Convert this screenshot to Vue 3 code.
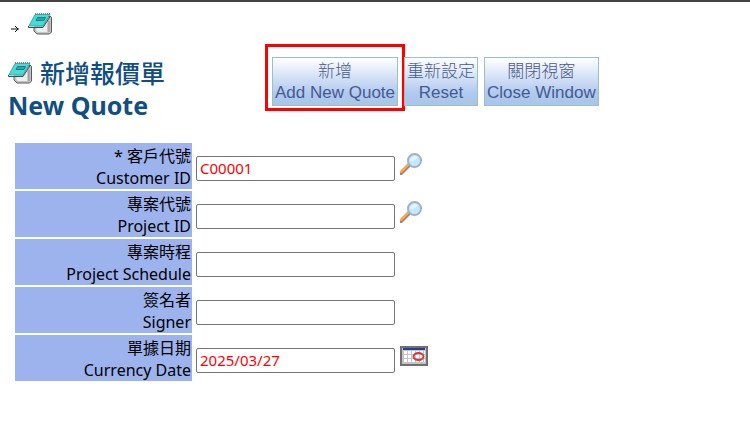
<template>
  <div class="page">

    <svg class="symbols" aria-hidden="true">
      <symbol id="book" viewBox="0 0 24 22">
        <path d="M8 3.5h14.5l1 1V19l-2 2H9l-3-3v-4" fill="#c6c4c4" stroke="#5c5a5a" />
        <path d="M9 15h6l4-7v11H10l-2-2z" fill="#efeded" />
        <path d="M20 8h2v11h-2z" fill="#a9a7a7" />
        <path d="M7 1.5h15L15 13H.8z" fill="#45dcd8" stroke="#2b8f92" stroke-width=".7" />
        <path d="M.5 13v1.5H15L22.500 3" fill="none" stroke="#2d5658" />
        <path d="M9.500 4.500h8L16 7.500H8z" fill="#2ba6aa" stroke="#176f78" stroke-width=".8" />
        <path d="M7 .8h15" stroke="#555" stroke-dasharray="1 1" />
      </symbol>
      <symbol id="lens" viewBox="0 0 22 22">
        <path d="M1 20l8-8" stroke="#b57a5c" stroke-width="4" stroke-linecap="round" />
        <path d="M1 19l7-7" stroke="#f8ad5c" stroke-width="2" stroke-linecap="round" />
        <circle cx="14.5" cy="7.5" r="6.5" fill="#c4eafd" stroke="#9bb0de" stroke-width="2" />
        <path d="M10 8a5 5 0 0 1 8-4q-2 4-8 4z" fill="#e5f8ff" />
      </symbol>
    </svg>

    <nav class="crumb">
      <svg class="arrow" viewBox="0 0 10 8"><path d="M1 4h8M5 1l3 3-3 3" /></svg>
      <svg class="book"><use href="#book" /></svg>
    </nav>

    <header class="head">
      <h1 class="title">
        <span class="title-zh"><svg class="book"><use href="#book" /></svg>新增報價單</span>
        <span>New Quote</span>
      </h1>
      <div class="actions">
        <div v-for="b in buttons" :key="b.en" class="action" :class="{ marked: b.marked }">
          <button type="button" @click="run(b.action)">{{ b.zh }}<br>{{ b.en }}</button>
        </div>
      </div>
    </header>

    <table class="form">
      <tbody>
        <tr v-for="f in fields" :key="f.id">
          <th scope="row">
            <label :for="f.id">{{ f.zh }}<br>{{ f.en }}</label>
          </th>
          <td>
            <div class="field">
              <input :id="f.id" v-model="form[f.id]" type="text">
              <button v-if="f.icon === 'lens'" type="button" class="icon" :aria-label="f.en">
                <svg class="lens"><use href="#lens" /></svg>
              </button>
              <button v-if="f.icon === 'calendar'" type="button" class="icon" :aria-label="f.en">
                <svg class="calendar" viewBox="0 0 28 20">
                  <rect x="1" y="1" width="26" height="18" fill="#c4c4c4" stroke="#707070" stroke-width="2" />
                  <path d="M3 3h22" stroke="#1c429c" stroke-width="2" />
                  <path d="M4 6.500h21M4 10.500h21M4 14.500h21" stroke="#fff" stroke-width="3" stroke-dasharray="3 1" />
                  <ellipse cx="18.500" cy="10.500" rx="5" ry="3.500" fill="none" stroke="#d93535" stroke-width="2" />
                </svg>
              </button>
            </div>
          </td>
        </tr>
      </tbody>
    </table>

  </div>
</template>

<script setup>
import { reactive } from "vue"

const emit = defineEmits(["add", "close"])

const buttons = [
  { zh: "新增", en: "Add New Quote", action: "add", marked: true },
  { zh: "重新設定", en: "Reset", action: "reset" },
  { zh: "關閉視窗", en: "Close Window", action: "close" }
]

const fields = [
  { id: "customer", zh: "* 客戶代號", en: "Customer ID", icon: "lens" },
  { id: "project", zh: "專案代號", en: "Project ID", icon: "lens" },
  { id: "schedule", zh: "專案時程", en: "Project Schedule" },
  { id: "signer", zh: "簽名者", en: "Signer" },
  { id: "date", zh: "單據日期", en: "Currency Date", icon: "calendar" }
]

const initial = {
  customer: "C00001",
  project: "",
  schedule: "",
  signer: "",
  date: "2025/03/27"
}

const form = reactive({ ...initial })

function run(action) {
  if (action === "reset") {
    Object.assign(form, initial)
  } else {
    emit(action, { ...form })
  }
}
</script>

<style>
body {
  background: #fff;
}
</style>

<style scoped>
.page {
  box-sizing: border-box;
  border-top: 2px solid #434343;
  padding: 10px 8px 0;
  font-family: "Noto Sans", "Noto Sans CJK TC", sans-serif;
  color: #000;
}

.symbols {
  position: absolute;
  width: 0;
  height: 0;
}

.crumb {
  display: flex;
  align-items: center;
  gap: 8px;
  height: 24px;
  padding-left: 2px;
}

.arrow {
  width: 10px;
  height: 8px;
  margin-top: 10px;
  fill: none;
  stroke: #111;
}

.book {
  width: 24px;
  height: 22px;
  flex: none;
}

.head {
  display: flex;
  align-items: flex-start;
  padding-top: 21px;
}

.title {
  width: 264px;
  margin: 0;
  font-size: 25px;
  line-height: 32px;
  color: #104e84;
}

.title span {
  display: block;
}

.title .title-zh {
  display: flex;
  align-items: center;
  gap: 8px;
  font-weight: 500;
}

.actions {
  display: flex;
  gap: 6px;
}

.action {
  position: relative;
}

.action button {
  height: 49px;
  padding: 0 2px;
  border: 1px solid #9dbfc0;
  background: linear-gradient(#fff, #b0c9ee 75%, #a9c5ea);
  font-family: "Liberation Sans", "Noto Sans CJK TC", sans-serif;
  font-size: 17px;
  font-weight: 300;
  line-height: 21px;
  color: #48598f;
  white-space: nowrap;
}

.marked::after {
  content: "";
  position: absolute;
  inset: -13px -7px -5px;
  border: 3px solid #f00;
  pointer-events: none;
}

.form {
  margin: 20px 0 0 5px;
  border-spacing: 2px;
}

.form th {
  width: 175px;
  height: 44px;
  padding: 2px 1px 0;
  background: #9db3ee;
  font-size: 16px;
  font-weight: 400;
  line-height: 22px;
  text-align: right;
}

.form label {
  display: block;
}

.form td {
  padding: 1px 2px;
}

.field {
  display: flex;
  align-items: center;
  gap: 5px;
}

.field input {
  box-sizing: border-box;
  width: 199px;
  height: 25px;
  margin: 4px 0 0;
  padding: 1px 3px;
  border: 1px solid #767676;
  border-radius: 2px;
  background: #fff;
  font-family: inherit;
  font-size: 15px;
  color: #f00;
}

.icon {
  padding: 0;
  border: 0;
  background: none;
  margin-bottom: 5px;
}

.icon svg {
  display: block;
}

.lens {
  width: 22px;
  height: 22px;
}

.calendar {
  width: 28px;
  height: 20px;
}
</style>
